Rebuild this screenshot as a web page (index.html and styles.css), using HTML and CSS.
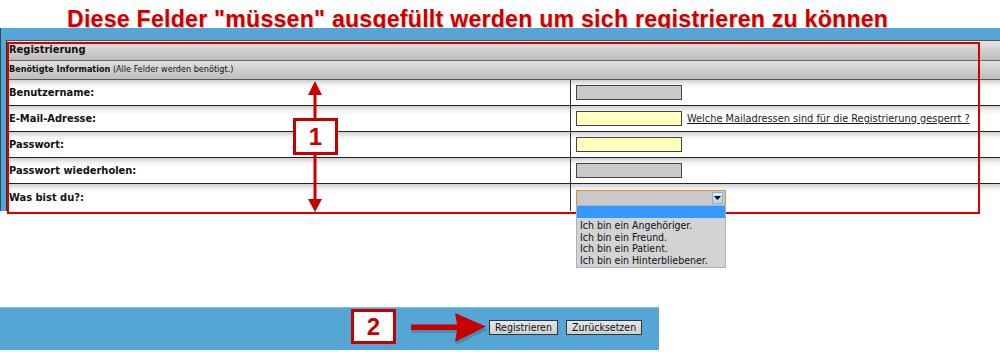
FILE: index.html
```html
<!DOCTYPE html>
<html lang="de">
<head>
<meta charset="utf-8">
<title>Registrierung</title>
<link rel="stylesheet" href="styles.css">
</head>
<body>
<div class="page">
  <h1 class="title">Diese Felder "müssen" ausgefüllt werden um sich registrieren zu können</h1>

  <div class="frame">
    <div class="table">
      <div class="row-head">Registrierung</div>
      <div class="row-sub"><b>Benötigte Information</b> (Alle Felder werden benötigt.)</div>

      <div class="row">
        <div class="label">Benutzername:</div>
        <div class="value"><span class="field grey"></span></div>
      </div>
      <div class="row">
        <div class="label">E-Mail-Adresse:</div>
        <div class="value"><span class="field yellow"></span><a class="link" href="#">Welche Mailadressen sind für die Registrierung gesperrt ?</a></div>
      </div>
      <div class="row">
        <div class="label">Passwort:</div>
        <div class="value"><span class="field yellow"></span></div>
      </div>
      <div class="row">
        <div class="label">Passwort wiederholen:</div>
        <div class="value"><span class="field grey"></span></div>
      </div>
      <div class="row last">
        <div class="label">Was bist du?:</div>
        <div class="value">
          <div class="select">
            <span class="select-btn"><svg width="7" height="4" viewBox="0 0 7 4"><path d="M0 0h7L3.5 4z" fill="#000"/></svg></span>
            <ul class="options">
              <li class="opt active">&nbsp;</li>
              <li class="opt">Ich bin ein Angehöriger.</li>
              <li class="opt">Ich bin ein Freund.</li>
              <li class="opt">Ich bin ein Patient.</li>
              <li class="opt">Ich bin ein Hinterbliebener.</li>
            </ul>
          </div>
        </div>
      </div>
    </div>
    <div class="redbox"></div>
    <svg class="mark-arrow" width="20" height="132" viewBox="0 0 20 132">
      <path d="M10 0 L17 14 L11.5 14 L11.5 118 L17 118 L10 131 L3 118 L8.5 118 L8.5 14 L3 14 Z" fill="#c80000"/>
    </svg>
    <span class="num num-1">1</span>
  </div>

  <div class="gap"></div>

  <div class="footer">
    <button class="btn" type="button">Registrieren</button>
    <button class="btn" type="button">Zurücksetzen</button>
    <span class="num num-2">2</span>
    <svg class="arrow-2" width="82" height="34" viewBox="0 0 82 34">
      <path d="M2 13.5 L48 13.5 L46 2 L78 15.5 L46 31 L48 19 L2 19 Z" fill="#3a6f8e" opacity="0.45" transform="translate(1 2)"/>
      <path d="M2 12.5 L48 12.5 L46 1 L77 14.5 L46 30 L48 18 L2 18 Z" fill="#c80000"/>
    </svg>
  </div>
</div>
</body>
</html>
```

FILE: styles.css
```css
* { box-sizing: border-box; }
html, body { margin: 0; padding: 0; background: #fff; }
body { width: 1000px; height: 352px; overflow: hidden; font-family: "DejaVu Sans Condensed", "DejaVu Sans", sans-serif; color: #111; }
.page { position: relative; width: 1000px; height: 352px; }

.title {
  margin: 0;
  height: 28px;
  padding: 8px 0 0 67px;
  font-family: "Liberation Sans", Arial, sans-serif;
  font-weight: bold;
  font-size: 23px;
  line-height: 23px;
  letter-spacing: 0.3px;
  color: #cc0000;
  text-shadow: 1px 1px 1px rgba(120,0,0,0.25);
  white-space: nowrap;
  overflow: visible;
}

.frame {
  position: relative;
  background: #55a5d5;
  padding: 12px 0 0 5px;
  border-left: 1px solid #2b4a60;
}
.table {
  background: #fff;
  border-left: 1px solid #333;
  border-top: 1px solid #555;
}
.row-head {
  height: 20px;
  padding: 2px 0 0 2px;
  font-size: 11px;
  font-weight: bold;
  background: linear-gradient(#e4e4e4, #bcbcbc);
  border-bottom: 1px solid #6a6a6a;
}
.row-sub {
  height: 19px;
  padding: 3px 0 0 2px;
  font-size: 9px;
  background: linear-gradient(#e0e0e0, #bdbdbd);
  border-bottom: 1px solid #555;
}
.row-sub b { font-weight: bold; }
.row {
  display: flex;
  height: 26px;
  border-bottom: 1px solid #222;
  background: linear-gradient(#cfcfcf 0, #f4f4f4 5px, #fff 9px);
}
.row.last { height: 27px; border-bottom: none; }
.label {
  width: 564px;
  padding-left: 2px;
  display: flex;
  align-items: center;
  font-size: 11px;
  font-weight: bold;
  border-right: 1px solid #333;
}
.value {
  flex: 1;
  display: flex;
  align-items: center;
  padding-left: 5px;
}
.field {
  display: block;
  width: 106px;
  height: 15px;
  border: 1px solid #444;
}
.field.grey { background: #c9c9c9; }
.field.yellow { background: #ffffbe; }
.link {
  margin-left: 5px;
  font-size: 10.9px;
  color: #1a1a1a;
  text-decoration: underline;
}

.select {
  position: relative;
  width: 150px;
  height: 16px;
  margin-top: 1px;
  border: 1px solid #c49a3c;
  background: #c9c9c9;
  display: flex;
  justify-content: flex-end;
  align-items: center;
  padding-right: 2px;
}
.select-btn {
  width: 11px;
  height: 12px;
  background: linear-gradient(#dcebf8, #b6d2ec);
  border: 1px solid #8fb0cf;
  display: flex;
  align-items: center;
  justify-content: center;
}
.options {
  position: absolute;
  left: -1px;
  top: 14px;
  width: 150px;
  margin: 0;
  padding: 0 0 1px;
  list-style: none;
  background: #d3d3d3;
  border: 1px solid #9fb6c8;
  z-index: 3;
}
.opt {
  font-size: 10.5px;
  line-height: 11.5px;
  height: 11.5px;
  padding-left: 3px;
  color: #111;
  white-space: nowrap;
}
.opt.active { background: #3399ff; height: 12px; margin-bottom: 2px; }

.redbox {
  position: absolute;
  left: 6px;
  top: 14px;
  width: 973px;
  height: 172px;
  border: 2px solid #d40000;
  pointer-events: none;
  z-index: 2;
}
.mark-arrow {
  position: absolute;
  left: 304px;
  top: 53px;
  z-index: 2;
}
.num {
  position: absolute;
  display: flex;
  align-items: center;
  justify-content: center;
  background: #fff;
  border: 3px solid #c40000;
  font-family: "Liberation Sans", Arial, sans-serif;
  font-weight: bold;
  font-size: 24px;
  color: #c40000;
  z-index: 4;
}
.num-1 { left: 292px; top: 90px; width: 45px; height: 37px; }
.num-2 { left: 351px; top: 1px; width: 45px; height: 35px; }

.gap { height: 96px; }

.footer {
  position: relative;
  width: 659px;
  height: 43px;
  background: #55a5d5;
  border-top: 1px solid #7fbde3;
  display: flex;
  align-items: flex-start;
  gap: 8px;
  padding: 12px 0 0 489px;
}
.btn {
  margin: 0;
  height: 15px;
  padding: 0 5px;
  font-family: "DejaVu Sans Condensed", "DejaVu Sans", sans-serif;
  font-size: 10.5px;
  line-height: 13px;
  color: #111;
  background: linear-gradient(#e6e6e6, #cfcfcf);
  border: 1px solid #333;
  border-radius: 0;
}
.arrow-2 {
  position: absolute;
  left: 409px;
  top: 4px;
}
```
